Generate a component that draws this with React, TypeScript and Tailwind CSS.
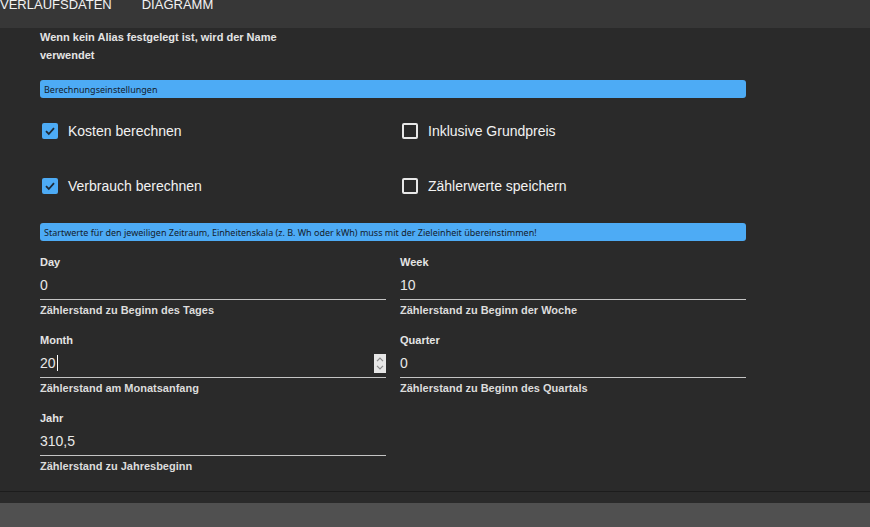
import type { ReactNode } from 'react'

function Banner({ children }: { children: ReactNode }) {
  return (
    <div className="flex h-[18px] items-center rounded-[3px] bg-[#4dabf5] pl-[4px] font-['Noto_Sans',sans-serif] text-[9px] leading-none text-[#14202c]">
      {children}
    </div>
  )
}

function CheckRow({ label, checked }: { label: string; checked: boolean }) {
  return (
    <div className="flex h-[55px] items-center gap-[10px] pl-[2px]">
      {checked ? (
        <div className="flex h-[16px] w-[16px] items-center justify-center rounded-[2px] bg-[#4dabf5]">
          <svg width="12" height="12" viewBox="0 0 12 12" fill="none">
            <path d="M2 6.2 L4.8 9 L10 3.2" stroke="#1e2a36" strokeWidth="1.8" />
          </svg>
        </div>
      ) : (
        <div className="h-[16px] w-[16px] rounded-[2px] border-2 border-[#e8e8e8]" />
      )}
      <span className="mt-[1px] text-[14px] text-[#f2f2f2]">{label}</span>
    </div>
  )
}

function Field({
  label,
  value,
  helper,
  focused,
}: {
  label: string
  value: string
  helper: string
  focused?: boolean
}) {
  return (
    <div className="flex flex-col">
      <div className="h-[14px] text-[11px] font-bold leading-[14px] text-[#e4e4e4]">{label}</div>
      <div className="mt-[6px] flex h-[25px] items-start border-b border-[#c4c4c4] pb-[4px]">
        <div className="flex h-[20px] flex-1 items-center text-[14px] leading-[20px] text-[#e8e8e8]">
          {value}
          {focused && <span className="ml-[1px] h-[16px] w-[1px] bg-white" />}
        </div>
        {focused && (
          <div className="mt-[1px] flex h-[19px] w-[12px] flex-col items-center justify-center gap-[3px] bg-[#e6e6e6]">
            <svg width="8" height="5" viewBox="0 0 8 5" fill="none">
              <path d="M1 4.2 L4 1.2 L7 4.2" stroke="#8a8a8a" strokeWidth="1.2" />
            </svg>
            <svg width="8" height="5" viewBox="0 0 8 5" fill="none">
              <path d="M1 0.8 L4 3.8 L7 0.8" stroke="#8a8a8a" strokeWidth="1.2" />
            </svg>
          </div>
        )}
      </div>
      <div className="mt-[3px] h-[14px] text-[11px] font-bold leading-[14px] text-[#dcdcdc]">{helper}</div>
    </div>
  )
}

export default function App() {
  return (
    <div className="flex h-[527px] w-full flex-col overflow-hidden bg-[#2a2a2a] font-['Liberation_Sans',Arial,sans-serif]">
      <div className="flex h-[28px] shrink-0 items-start gap-[30px] bg-[#373737] text-[13px] uppercase leading-[13px] text-[#f2f2f2]">
        <span className="-mt-[2px]">Verlaufsdaten</span>
        <span className="-mt-[2px]">Diagramm</span>
      </div>

      <div className="h-[464px] shrink-0 border-b border-[#1c1c1c]">
        <div className="ml-[40px] w-[706px]">
          <div className="w-[250px] text-[11px] font-bold leading-[18px] text-[#e4e4e4]">
            Wenn kein Alias festgelegt ist, wird der Name verwendet
          </div>

          <div className="mt-[16px]">
            <Banner>Berechnungseinstellungen</Banner>
          </div>

          <div className="mt-[5px] grid grid-cols-2 gap-x-[14px]">
            <CheckRow label="Kosten berechnen" checked />
            <CheckRow label="Inklusive Grundpreis" checked={false} />
            <CheckRow label="Verbrauch berechnen" checked />
            <CheckRow label="Zählerwerte speichern" checked={false} />
          </div>

          <div className="mt-[10px]">
            <Banner>
              Startwerte für den jeweiligen Zeitraum, Einheitenskala (z. B. Wh oder kWh) muss mit der Zieleinheit
              übereinstimmen!
            </Banner>
          </div>

          <div className="mt-[14px] grid grid-cols-2 gap-x-[14px] gap-y-[16px]">
            <Field label="Day" value="0" helper="Zählerstand zu Beginn des Tages" />
            <Field label="Week" value="10" helper="Zählerstand zu Beginn der Woche" />
            <Field label="Month" value="20" helper="Zählerstand am Monatsanfang" focused />
            <Field label="Quarter" value="0" helper="Zählerstand zu Beginn des Quartals" />
            <Field label="Jahr" value="310,5" helper="Zählerstand zu Jahresbeginn" />
          </div>
        </div>
      </div>

      <div className="h-[11px] shrink-0 bg-[#2a2a2a]" />
      <div className="flex-1 bg-[#505050]" />
    </div>
  )
}
